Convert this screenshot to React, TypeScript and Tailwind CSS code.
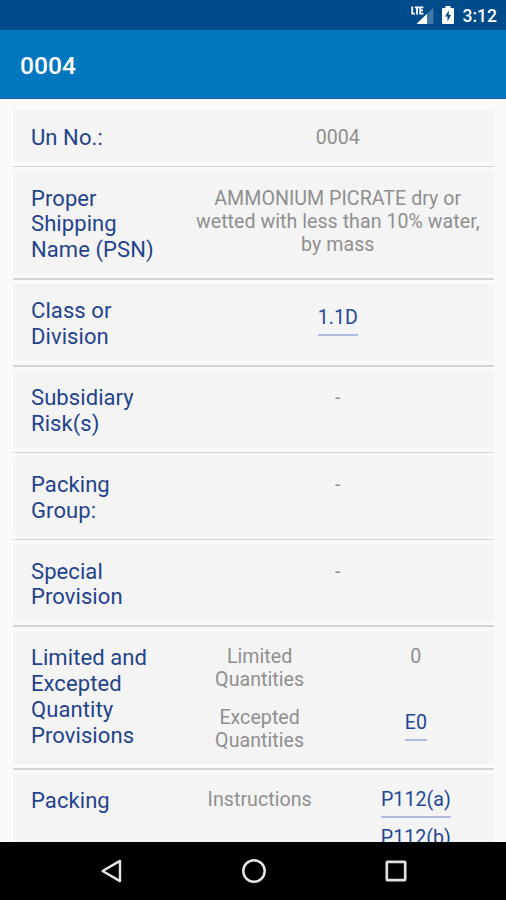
import type { ReactNode } from "react"

interface RowProps {
  label: string[]
  children: ReactNode
}

function Row({ label, children }: RowProps) {
  return (
    <section className="shrink-0">
      <div className="flex bg-[#f4f4f4] pt-[14.3px] pb-[11.2px]">
        <h2 className="w-[169px] shrink-0 pl-[18.5px] text-[22px] leading-[25.8px] tracking-[0.08px] text-[#1f438c]">
          {label.map((line) => (
            <span key={line} className="block whitespace-nowrap">
              {line}
            </span>
          ))}
        </h2>
        <div className="flex-1 text-center text-[19.6px] leading-[22.9px] tracking-[0.04px] text-[#8f8f8f]">
          {children}
        </div>
      </div>
      <div className="mt-1 mb-[4.2px] h-[1.5px] bg-[#d4d4d4]" />
    </section>
  )
}

function Lines({ lines }: { lines: string[] }) {
  return (
    <p>
      {lines.map((line) => (
        <span key={line} className="block whitespace-nowrap">
          {line}
        </span>
      ))}
    </p>
  )
}

function CodeLink({ code }: { code: string }) {
  return (
    <a
      href="#"
      className="inline-block border-b-2 border-[#b0bce0] pb-[4px] text-[#1f4896]"
    >
      {code}
    </a>
  )
}

function StatusBar() {
  return (
    <div className="flex h-[30px] shrink-0 items-center justify-end bg-[#004c8a] pr-[9px] text-white">
      <svg width="24" height="20" viewBox="0 0 24 20" className="mr-[7px]">
        <path d="M22.5 2.5V19H5.5z" fill="#3f78a8" />
        <path d="M16 8.8V19H5.5z" fill="#fff" />
        <path
          d="M1.2 1.5V8.7H3.8M3.8 2.3H8.2M6 2.3V9.4M12.4 2.3H9.2V8.6H12.4M9.2 5.4H12"
          fill="none"
          stroke="#fff"
          strokeWidth="1.8"
        />
      </svg>
      <svg width="12" height="18" viewBox="0 0 12 18" className="mr-[9px]">
        <path
          d="M3.5 0h5v2H11q1 0 1 1V17q0 1-1 1H1q-1 0-1-1V3q0-1 1-1h2.5z"
          fill="#fff"
        />
        <path d="M6.8 4.5 3 10.6h2.5v4.6L9.2 9H6.8z" fill="#004c8a" />
      </svg>
      <span className="pt-[1px] text-[17.5px] leading-[20px] font-medium">3:12</span>
    </div>
  )
}

function NavBar() {
  return (
    <nav className="flex h-[58px] shrink-0 items-center justify-between bg-black pr-[99px] pl-[100px]">
      <svg width="22" height="24" viewBox="0 0 22 24">
        <path
          d="M20 1.9V22.1L2.6 12z"
          fill="none"
          stroke="#e6e6e6"
          strokeWidth="2.4"
          strokeLinejoin="round"
        />
      </svg>
      <svg width="26" height="26" viewBox="0 0 26 26">
        <circle cx="13" cy="13" r="10.7" fill="none" stroke="#e6e6e6" strokeWidth="2.5" />
      </svg>
      <svg width="22" height="22" viewBox="0 0 22 22">
        <rect
          x="1.8"
          y="1.8"
          width="18.4"
          height="18.4"
          rx="0.8"
          fill="none"
          stroke="#e0e0e0"
          strokeWidth="2.7"
        />
      </svg>
    </nav>
  )
}

export default function App() {
  return (
    <div className="flex h-[900px] w-[506px] flex-col overflow-hidden bg-[#fafafa] font-['Roboto',sans-serif]">
      <StatusBar />
      <header className="flex h-[69px] shrink-0 items-center border-b border-[#1463ad] bg-[#0277bd] pt-[3px] pl-[20px]">
        <h1 className="text-[24.6px] leading-[28px] font-medium text-white">0004</h1>
      </header>

      <main className="flex min-h-0 flex-1 flex-col overflow-hidden pt-[11.4px] pr-3 pl-[12.5px]">
        <Row label={["Un No.:"]}>
          <div className="pt-[2.8px]">
            <Lines lines={["0004"]} />
          </div>
        </Row>
        <Row label={["Proper", "Shipping", "Name (PSN)"]}>
          <div className="pt-[2.8px]">
            <Lines
              lines={["AMMONIUM PICRATE dry or", "wetted with less than 10% water,", "by mass"]}
            />
          </div>
        </Row>
        <Row label={["Class or", "Division"]}>
          <div className="pt-[8.8px]">
            <CodeLink code="1.1D" />
          </div>
        </Row>
        <Row label={["Subsidiary", "Risk(s)"]}>
          <div className="pt-[2px]">
            <Lines lines={["-"]} />
          </div>
        </Row>
        <Row label={["Packing", "Group:"]}>
          <div className="pt-[2px]">
            <Lines lines={["-"]} />
          </div>
        </Row>
        <Row label={["Special", "Provision"]}>
          <div className="pt-[2px]">
            <Lines lines={["-"]} />
          </div>
        </Row>
        <Row label={["Limited and", "Excepted", "Quantity", "Provisions"]}>
          <div className="grid grid-cols-2 gap-y-[15.6px] pt-[0.4px]">
            <Lines lines={["Limited", "Quantities"]} />
            <Lines lines={["0"]} />
            <Lines lines={["Excepted", "Quantities"]} />
            <div className="pt-[5.2px]">
              <CodeLink code="E0" />
            </div>
          </div>
        </Row>
        <Row label={["Packing"]}>
          <div className="grid grid-cols-2 pt-[0.6px]">
            <Lines lines={["Instructions"]} />
            <div className="flex flex-col items-center gap-[9.6px]">
              <CodeLink code="P112(a)" />
              <CodeLink code="P112(b)" />
            </div>
          </div>
        </Row>
      </main>

      <NavBar />
    </div>
  )
}
